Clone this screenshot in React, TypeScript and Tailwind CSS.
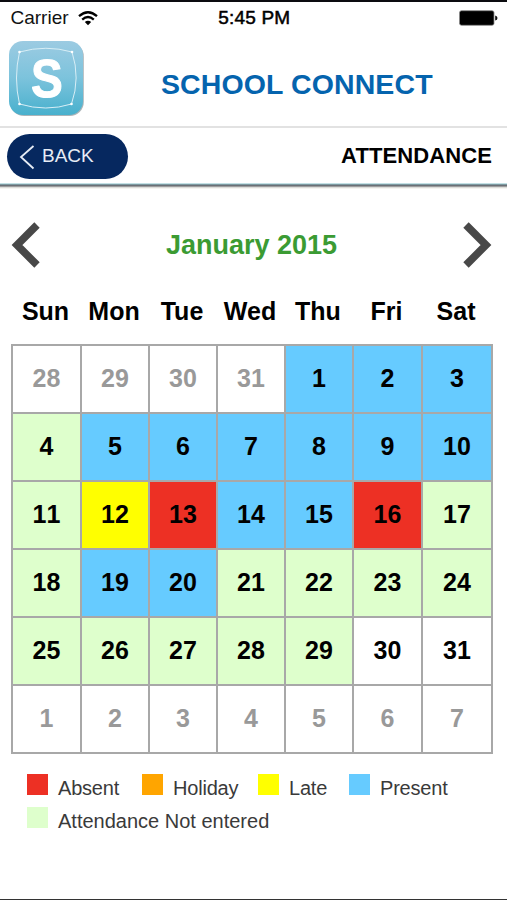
type Status = "out" | "none" | "present" | "absent" | "late" | "missing";

const fills: Record<Status, string> = {
  out: "bg-white text-[#999]",
  none: "bg-white text-black",
  present: "bg-[#66cbff] text-black",
  absent: "bg-[#ed3024] text-black",
  late: "bg-[#ffff00] text-black",
  missing: "bg-[#deffcc] text-black",
};

const codes: Record<string, Status> = {
  o: "out",
  n: "none",
  p: "present",
  a: "absent",
  l: "late",
  m: "missing",
};

const weeks = [
  "28o 29o 30o 31o 1p 2p 3p",
  "4m 5p 6p 7p 8p 9p 10p",
  "11m 12l 13a 14p 15p 16a 17m",
  "18m 19p 20p 21m 22m 23m 24m",
  "25m 26m 27m 28m 29m 30n 31n",
  "1o 2o 3o 4o 5o 6o 7o",
].map((w) => w.split(" ").map((c) => ({ day: c.slice(0, -1), status: codes[c.slice(-1)] })));

const columns = "grid grid-cols-[67px_66px_66px_66px_66px_67px_68px] gap-x-[2px]";

function Logo() {
  return (
    <svg viewBox="0 0 78 78" className="h-[78px] w-[78px] shrink-0">
      <defs>
        <linearGradient id="tile" x1="0" y1="0" x2="0" y2="1">
          <stop offset="0" stopColor="#9ccbe2" />
          <stop offset="0.5" stopColor="#7cc3dc" />
          <stop offset="1" stopColor="#48b0cd" />
        </linearGradient>
      </defs>
      <rect x="1" y="1.5" width="73.8" height="73.5" rx="14" fill="#8f9ba0" opacity="0.75" />
      <rect x="0" y="0" width="74" height="74" rx="14" fill="url(#tile)" />
      <path
        d="M10.5 11 Q37 3.5 63 11 Q71.5 37 62.5 63 Q37 71 10.5 63 Q4.5 37 10.5 11Z"
        fill="none"
        stroke="#d8eef6"
        strokeWidth="1"
      />
      <g fill="#fff">
        <circle cx="10.5" cy="11" r="1.3" />
        <circle cx="63" cy="11" r="1.3" />
        <circle cx="62.5" cy="63" r="1.3" />
        <circle cx="10.5" cy="63" r="1.3" />
      </g>
      <text
        transform="translate(38 55.6) scale(0.9 1)"
        textAnchor="middle"
        fontSize="53"
        fontWeight="700"
        fill="#fff"
        stroke="#fff"
        strokeWidth="1"
        strokeLinejoin="round"
      >
        S
      </text>
    </svg>
  );
}

function Wifi() {
  return (
    <svg viewBox="0 0 20 15" className="ml-[9px] h-[15px] w-[20px]" fill="none" stroke="#000" strokeWidth="2.3">
      <path d="M1 5.2 Q10 -2.6 19 5.2" />
      <path d="M4.2 8.6 Q10 3.4 15.8 8.6" />
      <path d="M10 14.2 L6.8 11 Q10 8.6 13.2 11Z" fill="#000" stroke="none" />
    </svg>
  );
}

function Arrow({ d }: { d: string }) {
  return (
    <svg viewBox="0 0 29 46" className="h-[46px] w-[29px]" fill="none" stroke="#484848" strokeWidth="7.6">
      <path d={d} />
    </svg>
  );
}

function Key({ color, label, className = "" }: { color: string; label: string; className?: string }) {
  return (
    <div className={`flex h-[33px] ${className}`}>
      <span className={`mt-[4px] h-[21px] w-[21px] ${color}`} />
      <span className="ml-[10px] text-[20px] leading-[36px] tracking-[-0.01em] whitespace-nowrap text-[#3a3a3a]">{label}</span>
    </div>
  );
}

export default function App() {
  return (
    <div className="flex h-[900px] w-[507px] flex-col overflow-hidden border-t-2 border-b border-t-[#0c0c10] border-b-[#333] bg-white font-['Liberation_Sans',Arial,sans-serif]">
      <div className="grid h-8 grid-cols-[1fr_auto_1fr] items-center pr-[9px] pl-[10.5px]">
        <div className="flex items-center">
          <span className="text-[19px] text-[#111]">Carrier</span>
          <Wifi />
        </div>
        <span className="text-[19px] tracking-[0.2px] [-webkit-text-stroke:0.5px_#000]">5:45 PM</span>
        <svg viewBox="0 0 39 16" className="h-4 w-[39px] justify-self-end">
          <rect x="0.5" y="0.7" width="34.5" height="14.6" rx="2" fill="#000" stroke="#888" strokeWidth="0.8" />
          <path d="M36.2 5.5 Q38.5 6 38.5 8 Q38.5 10 36.2 10.5Z" fill="#111" />
        </svg>
      </div>

      <header className="flex h-[92px] items-start pt-[7px] pl-[9px]">
        <Logo />
        <h1 className="ml-[74px] pt-[23px] text-[28.5px] leading-[40px] font-bold tracking-[0.1px] whitespace-nowrap text-[#0564ae]">
          SCHOOL CONNECT
        </h1>
      </header>

      <div className="flex h-[57px] justify-between border-t-2 border-[#e2e2e2] pt-[6px] pr-[15px] pl-[7px]">
        <button className="flex h-[45px] w-[121px] items-center rounded-full bg-[#06285f] pl-[12px] text-[19px] text-[#e6ecf5]">
          <svg viewBox="0 0 16 26" className="mr-[7px] h-[26px] w-4" fill="none" stroke="#e6ecf5" strokeWidth="1.8">
            <path d="M14.5 2 L2 13 L14.5 24.5" />
          </svg>
          BACK
        </button>
        <h2 className="text-[22px] leading-[43px] font-bold tracking-[0.1px]">ATTENDANCE</h2>
      </div>
      <div className="h-[6px] bg-[linear-gradient(to_bottom,#c3e0e4_0_1px,#7d99a0_1px_2px,#6a6f75_2px_3px,#9c9c9c_3px_4px,#dcdcda_4px_5px,#f5f5f0_5px_6px)]" />

      <div className="mt-[33px] flex h-[46px] items-center justify-between pr-[15px] pl-[11px]">
        <Arrow d="M26 3 L6 23 L26 43" />
        <span className="text-[27px] font-bold whitespace-nowrap text-[#3b9b33]">January 2015</span>
        <Arrow d="M3 3 L23 23 L3 43" />
      </div>

      <div className={`${columns} mt-[22px] ml-[12px] h-[41px] text-center text-[25px] leading-[42px] font-bold`}>
        {["Sun", "Mon", "Tue", "Wed", "Thu", "Fri", "Sat"].map((d) => (
          <span key={d}>{d}</span>
        ))}
      </div>

      <div className={`${columns} mt-[13px] ml-[11px] w-[482px] gap-y-[2px] border-2 border-[#a8a8a8] bg-[#a8a8a8]`}>
        {weeks.flat().map(({ day, status }, i) => (
          <span
            key={i}
            className={`flex h-[66px] items-center justify-center pb-px text-[25px] font-bold [font-kerning:none] ${fills[status]}`}
          >
            {day}
          </span>
        ))}
      </div>

      <div className="mt-[16px] ml-[27px] flex">
        <Key color="bg-[#ed3024]" label="Absent" className="w-[115px]" />
        <Key color="bg-[#ffa500]" label="Holiday" className="w-[116px]" />
        <Key color="bg-[#ffff00]" label="Late" className="w-[91px]" />
        <Key color="bg-[#66cbff]" label="Present" />
      </div>
      <Key color="bg-[#deffcc]" label="Attendance Not entered" className="ml-[27px] [&>span]:tracking-normal" />
    </div>
  );
}
